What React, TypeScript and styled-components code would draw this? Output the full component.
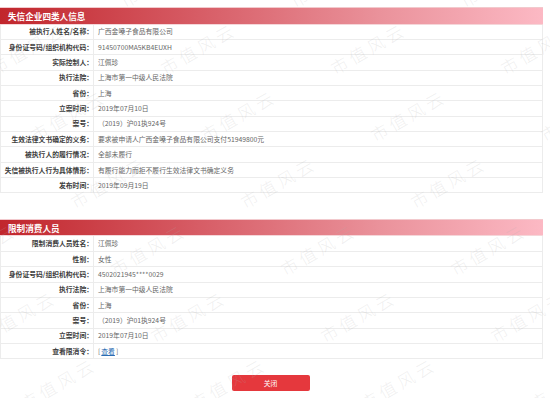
import React from 'react';
import styled, { createGlobalStyle } from 'styled-components';

const GlobalStyle = createGlobalStyle`
  html, body {
    margin: 0;
    padding: 0;
    background: #fff;
  }
  body {
    font-family: "Noto Sans CJK SC", "Noto Sans", sans-serif;
  }
`;

const Page = styled.div`
  position: relative;
  width: 550px;
  height: 398px;
  overflow: hidden;
  background: #fff;
`;

const Content = styled.div`
  width: 543px;
  padding-top: 7px;
  display: flex;
  flex-direction: column;
`;

const Section = styled.section`
  display: flex;
  flex-direction: column;
  & + & {
    margin-top: 25.5px;
  }
`;

const SectionTitle = styled.h3`
  margin: 0;
  height: 17.5px;
  box-sizing: border-box;
  display: flex;
  align-items: center;
  padding-left: 8px;
  font-size: 8.6px;
  font-weight: bold;
  color: #fff;
  background: linear-gradient(to right, #c1262c 0%, #d65a63 35%, #ea929b 70%, #fcb9c4 100%);
  border-top: 1px solid #f2c9cd;
  border-bottom: 1px solid #f5d6d9;
`;

const Table = styled.div`
  display: flex;
  flex-direction: column;
  border-right: 1px solid #ececec;
  border-left: 1px solid #ececec;
`;

const Row = styled.div`
  display: flex;
  height: 15.36px;
  box-sizing: border-box;
  border-bottom: 1px solid #ececec;
  font-size: 6.8px;
  line-height: 1;
`;

const Label = styled.div`
  width: 93px;
  flex-shrink: 0;
  box-sizing: border-box;
  display: flex;
  align-items: center;
  justify-content: flex-end;
  border-right: 1px solid #ececec;
  color: #3c3c3c;
  font-weight: bold;
  white-space: nowrap;
`;

const Value = styled.div`
  flex: 1;
  display: flex;
  align-items: center;
  padding-left: 4px;
  color: #666;
  white-space: nowrap;
`;

const Link = styled.a`
  color: #2b6cb3;
  text-decoration: underline;
  margin: 0 1px;
`;

const Footer = styled.div`
  display: flex;
  justify-content: center;
  padding-top: 15.5px;
  padding-right: 2px;
`;

const CloseButton = styled.button`
  width: 78px;
  height: 16px;
  padding: 0;
  border: none;
  border-radius: 2px;
  background: #e5383d;
  color: #fff;
  font-family: inherit;
  font-size: 6.8px;
  cursor: pointer;
`;

const Watermarks = styled.div`
  position: absolute;
  inset: 0;
  pointer-events: none;
  overflow: hidden;
`;

const Mark = styled.span`
  position: absolute;
  transform: translate(-50%, -50%) rotate(-30deg);
  font-size: 17px;
  letter-spacing: 4px;
  color: rgba(175, 175, 175, 0.2);
  white-space: nowrap;
  font-weight: 300;
`;

type Item = { label: string; value: React.ReactNode };

const dishonest: Item[] = [
  { label: '被执行人姓名/名称：', value: '广西金嗓子食品有限公司' },
  { label: '身份证号码/组织机构代码：', value: '91450700MA5KB4EUXH' },
  { label: '实际控制人：', value: '江佩珍' },
  { label: '执行法院：', value: '上海市第一中级人民法院' },
  { label: '省份：', value: '上海' },
  { label: '立案时间：', value: '2019年07月10日' },
  { label: '案号：', value: '（2019）沪01执924号' },
  { label: '生效法律文书确定的义务：', value: '要求被申请人广西金嗓子食品有限公司支付51949800元' },
  { label: '被执行人的履行情况：', value: '全部未履行' },
  { label: '失信被执行人行为具体情形：', value: '有履行能力而拒不履行生效法律文书确定义务' },
  { label: '发布时间：', value: '2019年09月19日' },
];

const restricted: Item[] = [
  { label: '限制消费人员姓名：', value: '江佩珍' },
  { label: '性别：', value: '女性' },
  { label: '身份证号码/组织机构代码：', value: '4502021945****0029' },
  { label: '执行法院：', value: '上海市第一中级人民法院' },
  { label: '省份：', value: '上海' },
  { label: '案号：', value: '（2019）沪01执924号' },
  { label: '立案时间：', value: '2019年07月10日' },
  {
    label: '查看限消令：',
    value: (
      <>
        [<Link href="#">查看</Link>]
      </>
    ),
  },
];

// watermark lattice, read off the screenshot
const markPositions = () => {
  const list: { x: number; y: number }[] = [];
  for (let k = -1; k <= 6; k++) {
    const y = 48 + 67 * k;
    let x = 198 + 40 * k;
    while (x > -120) x -= 170;
    for (; x < 660; x += 170) list.push({ x, y });
  }
  return list;
};

const InfoTable: React.FC<{ title: string; items: Item[] }> = ({ title, items }) => (
  <Section>
    <SectionTitle>{title}</SectionTitle>
    <Table>
      {items.map((it) => (
        <Row key={it.label}>
          <Label>{it.label}</Label>
          <Value>{it.value}</Value>
        </Row>
      ))}
    </Table>
  </Section>
);

const App: React.FC = () => (
  <Page>
    <GlobalStyle />
    <Content>
      <InfoTable title="失信企业四类人信息" items={dishonest} />
      <InfoTable title="限制消费人员" items={restricted} />
      <Footer>
        <CloseButton>关闭</CloseButton>
      </Footer>
    </Content>
    <Watermarks>
      {markPositions().map((p, i) => (
        <Mark key={i} style={{ left: p.x, top: p.y }}>
          市值风云
        </Mark>
      ))}
    </Watermarks>
  </Page>
);

export default App;
